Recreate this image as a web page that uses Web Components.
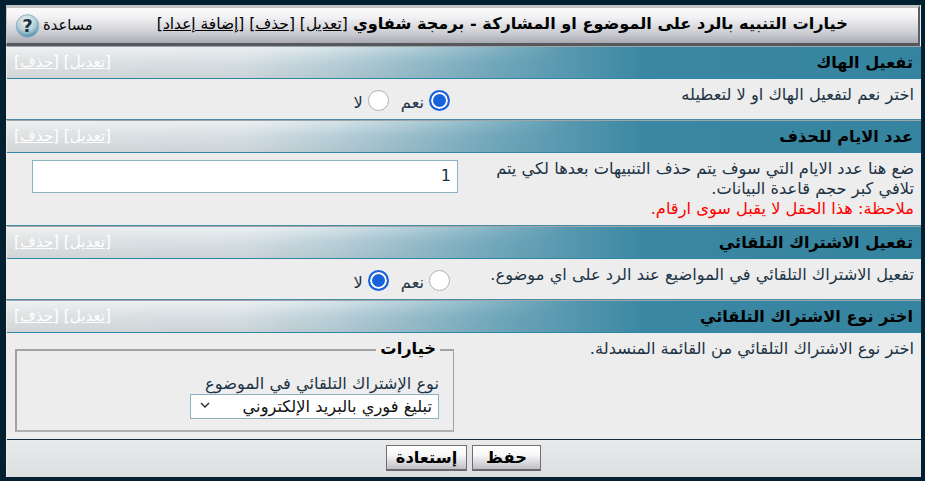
<!DOCTYPE html>
<html lang="ar" dir="rtl"><head><meta charset="utf-8">
<style>
html,body{margin:0;padding:0;background:#02202f;height:481px;overflow:hidden}
body{font-family:"DejaVu Sans",sans-serif;font-size:16.25px;color:#1c3345}
</style></head><body>
<cp-panel>
<cp-title slot="title"></cp-title>
<cp-section heading="تفعيل الهاك" style="--row-h:41px">
  <span>اختر نعم لتفعيل الهاك او لا لتعطيله</span>
  <cp-yesno slot="control" value="yes"></cp-yesno>
</cp-section>
<cp-section heading="عدد الايام للحذف" style="--row-h:73px">
  <span>ضع هنا عدد الايام التي سوف يتم حذف التنبيهات بعدها لكي يتم تلافي كبر حجم قاعدة البيانات.<br><span style="color:#f00">ملاحظة: هذا الحقل لا يقبل سوى ارقام.</span></span>
  <cp-number slot="control" value="1"></cp-number>
</cp-section>
<cp-section heading="تفعيل الاشتراك التلقائي" style="--row-h:41px">
  <span>تفعيل الاشتراك التلقائي في المواضيع عند الرد على اي موضوع.</span>
  <cp-yesno slot="control" value="no"></cp-yesno>
</cp-section>
<cp-section heading="اختر نوع الاشتراك التلقائي" style="--row-h:106px;--line:#ededed">
  <span>اختر نوع الاشتراك التلقائي من القائمة المنسدلة.</span>
  <cp-options slot="control"></cp-options>
</cp-section>
<cp-footer slot="footer"></cp-footer>
</cp-panel>
<script>
function def(name,css,html){
  customElements.define(name,class extends HTMLElement{
    connectedCallback(){
      if(this.shadowRoot)return;
      const s=this.attachShadow({mode:'open'});
      s.innerHTML='<style>'+css+'</style>'+(typeof html==='function'?html(this):html);
    }
  });
}
def('cp-panel',`
:host{display:block;box-sizing:border-box;width:915px;height:472px;margin:5px 4px 0 6px;background:#ededed}
.w{display:flex;flex-direction:column}
`,`<div class="w"><slot name="title"></slot><slot></slot><slot name="footer"></slot></div>`);

def('cp-title',`
:host{display:block;box-sizing:border-box;height:41px;margin-right:1px;background:linear-gradient(#fbfbfc 0,#f3f3f5 25%,#c9cad0 75%,#a9aab2 100%);border-top:3px solid #c4c4c4;border-right:2px solid #5b5f64;border-left:1px solid #c4c4c4;border-bottom:3px solid #55585c;}
.r{display:flex;align-items:center;height:100%;padding:0 0 0 8px;position:relative;color:#000}
.t{flex:1;text-align:center;white-space:nowrap;padding:0 0 4px 0;margin-right:6px;font-size:16.15px}
b{font-weight:bold}
.k{font-size:15.45px}
a{color:#000;text-decoration:underline}
.h{display:flex;align-items:center;gap:3px;font-size:14.7px;color:#000}
.h span{position:relative;top:-1px}
svg{display:block}
`,`<div class="r"><div class="t"><b>خيارات التنبيه بالرد على الموضوع او المشاركة - برمجة شفاوي</b> <span class="k">[<a>تعديل</a>] [<a>حذف</a>] [<a>إضافة إعداد</a>]</span></div>
<div class="h"><span>مساعدة</span><svg width="25" height="24" viewBox="0 0 25 24"><defs><radialGradient id="g" cx="45%" cy="30%" r="70%"><stop offset="0" stop-color="#f2f6f7"/><stop offset=".6" stop-color="#b4ced8"/><stop offset="1" stop-color="#4b8ba3"/></radialGradient></defs><circle cx="12.5" cy="12" r="11.3" fill="url(#g)" stroke="#8fb2c0"/><text x="12.5" y="18" font-family="DejaVu Sans" font-weight="bold" font-size="18" text-anchor="middle" fill="#22313e">?</text></svg></div></div>`);

def('cp-section',`
:host{display:block;box-sizing:border-box}
.h{box-sizing:border-box;height:33px;margin-left:1px;display:flex;justify-content:space-between;align-items:center;padding:0 8px 1px 7px;border-top:1px solid #9fa6aa;border-bottom:1px solid #2e86a4;position:relative;background:linear-gradient(to left,#35849f 0,#3a87a3 30%,#6fa6ba 46%,#b8cfd8 64%,#d6dfe3 74%,#dfe1e3 100%);}
.h::after{content:"";position:absolute;inset:0;background:linear-gradient(rgba(255,255,255,.5),rgba(255,255,255,0) 50%,rgba(0,0,0,.05));-webkit-mask-image:linear-gradient(to right,#000 30%,transparent 62%);mask-image:linear-gradient(to right,#000 30%,transparent 62%)}
b,.e{position:relative;z-index:1}
b{font-size:16.15px;color:#000;white-space:nowrap}
.e{font-size:15.2px;color:#fff;white-space:nowrap}
.e a{text-decoration:underline}
.r{box-sizing:border-box;height:var(--row-h);background:#ededed;display:flex;border-bottom:1px solid var(--line,#4a8ca6)}
.d{width:459px;box-sizing:border-box;padding:6px 7px 0 20px;line-height:20px;font-size:16.25px;color:#1c3345}
.c{flex:1;min-width:0}
`,h=>`<div class="h" part="h"><b>${h.getAttribute('heading')}</b><span class="e">[<a>تعديل</a>] [<a>حذف</a>]</span></div>
<div class="r"><div class="d"><slot></slot></div><div class="c"><slot name="control"></slot></div></div>`);

def('cp-yesno',`
:host{display:flex;justify-content:flex-start;font-size:16.25px;color:#1c3345;box-sizing:border-box;padding:11px 12px 0 0}
.o{display:inline-flex;align-items:center;gap:5px}
i{display:block;box-sizing:border-box;width:21px;height:21px;border-radius:50%;background:#fff;border:1px solid #aeb0b4}
i.on{border:2px solid #1a62dc;background:#1a62dc;box-shadow:inset 0 0 0 2px #fff}
.y{margin-left:12px}
.s{position:relative;top:2px}
`,h=>{const y=h.getAttribute('value')==='yes';return `<span class="o y"><i class="${y?'on':''}"></i><span class="s">نعم</span></span><span class="o"><i class="${y?'':'on'}"></i><span class="s">لا</span></span>`});

def('cp-number',`
:host{display:block;padding:7px 4px 0 0}
.b{box-sizing:border-box;height:33px;width:426px;background:#fff;border:1px solid #8fb0c0;padding:0 6px;line-height:30px;font-size:16px;color:#1c3345}
`,h=>`<div class="b">${h.getAttribute('value')}</div>`);

def('cp-options',`
:host{display:block;padding:16px 8px 0 0}
.f{box-sizing:border-box;width:439px;height:83px;border-style:solid;border-color:#a2a2a4;border-width:2px 1px 2px 2px;border-bottom-color:#b0b0b2;position:relative;padding:23px 14px 0 13px;font-size:16.25px;color:#1c3345}
.l{position:absolute;top:-12px;right:13px;background:#ededed;padding:0 4px;font-weight:bold;font-size:16.25px;color:#000}
.t{line-height:20px}
.s{box-sizing:border-box;width:249px;height:25px;background:#fff;border:1px solid #8fb0c0;display:flex;justify-content:space-between;align-items:center;padding:0 6px 0 9px;font-size:16.25px;color:#111}
svg{display:block}
`,`<div class="f"><span class="l">خيارات</span><div class="t">نوع الإشتراك التلقائي في الموضوع</div>
<div class="s"><span>تبليغ فوري بالبريد الإلكتروني</span><svg width="10" height="6" viewBox="0 0 10 6" style="margin-bottom:3px"><path d="M1 1l4 4 4-4" fill="none" stroke="#222" stroke-width="1.3"/></svg></div></div>`);

def('cp-footer',`
:host{display:flex;box-sizing:border-box;height:38px;margin-left:1px;background:linear-gradient(#e9eaeb,#dcdee0);border-top:1px solid #0e2a3c;justify-content:center;align-items:flex-start;gap:5px;padding:5px 1px 0 0}
span{box-sizing:border-box;height:26px;display:flex;align-items:center;justify-content:center;border:1px solid #6f6f6f;border-bottom:2px solid #6a6a6a;background:linear-gradient(#fff 0,#f7f7f8 40%,#bfc0c5 100%);font-weight:bold;font-size:16.25px;color:#000}
.a{width:69px}.b{width:81px}
`,`<span class="a">حفظ</span><span class="b">إستعادة</span>`);
</script>
</body></html>
